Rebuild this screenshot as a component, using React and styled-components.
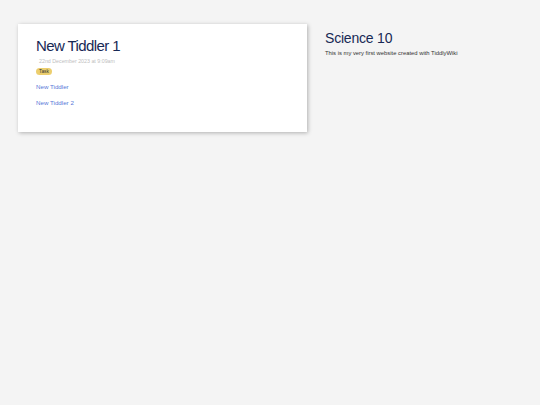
import React from 'react'
import styled, { createGlobalStyle } from 'styled-components'

const GlobalStyle = createGlobalStyle`
  html, body {
    margin: 0;
    padding: 0;
    background: #f4f4f4;
    font-family: "Liberation Sans", Arial, sans-serif;
  }
`;

const Page = styled.div`
  display: flex;
  align-items: flex-start;
  gap: 18px;
  padding: 24px 0 0 18px;
  min-height: 405px;
  box-sizing: border-box;
`;

const StoryRiver = styled.main`
  width: 289px;
  flex-shrink: 0;
`;

const Tiddler = styled.div`
  background: #fff;
  box-shadow: 1px 1px 4px rgba(0, 0, 0, 0.28);
  padding: 12.5px 18px 25px 18px;
`;

const Title = styled.h2`
  margin: 0;
  font-size: 15px;
  line-height: 18px;
  font-weight: 400;
  letter-spacing: -0.6px;
  color: #182955;
`;

const Subtitle = styled.div`
  margin: 3px 0 0 3px;
  font-size: 5.3px;
  line-height: 7px;
  color: #c0c0c0;
`;

const Tags = styled.div`
  display: flex;
  margin-top: 3.5px;
`;

const Tag = styled.span`
  display: inline-flex;
  align-items: center;
  height: 7px;
  padding: 0 3px;
  border-radius: 4px;
  background: #ecce6e;
  color: #333;
  font-size: 4.8px;
`;

const Body = styled.div`
  margin-top: 8.3px;
  display: flex;
  flex-direction: column;
  gap: 7.4px;
`;

const Link = styled.a`
  font-size: 6.2px;
  line-height: 8px;
  color: #5778d8;
  text-decoration: none;
`;

const Sidebar = styled.aside`
  padding-top: 6px;
`;

const SiteTitle = styled.h1`
  margin: 0;
  font-size: 14px;
  line-height: 17px;
  font-weight: 400;
  letter-spacing: -0.2px;
  color: #182955;
`;

const SiteSubtitle = styled.div`
  margin-top: 2px;
  font-size: 5.85px;
  line-height: 8px;
  color: #333;
`;

export default function App() {
  return (
    <>
      <GlobalStyle />
      <Page>
        <StoryRiver>
          <Tiddler>
            <Title>New Tiddler 1</Title>
            <Subtitle>22nd December 2023 at 9:09am</Subtitle>
            <Tags>
              <Tag>Task</Tag>
            </Tags>
            <Body>
              <Link href="#">New Tiddler</Link>
              <Link href="#">New Tiddler 2</Link>
            </Body>
          </Tiddler>
        </StoryRiver>
        <Sidebar>
          <SiteTitle>Science 10</SiteTitle>
          <SiteSubtitle>This is my very first website created with TiddlyWiki</SiteSubtitle>
        </Sidebar>
      </Page>
    </>
  )
}
